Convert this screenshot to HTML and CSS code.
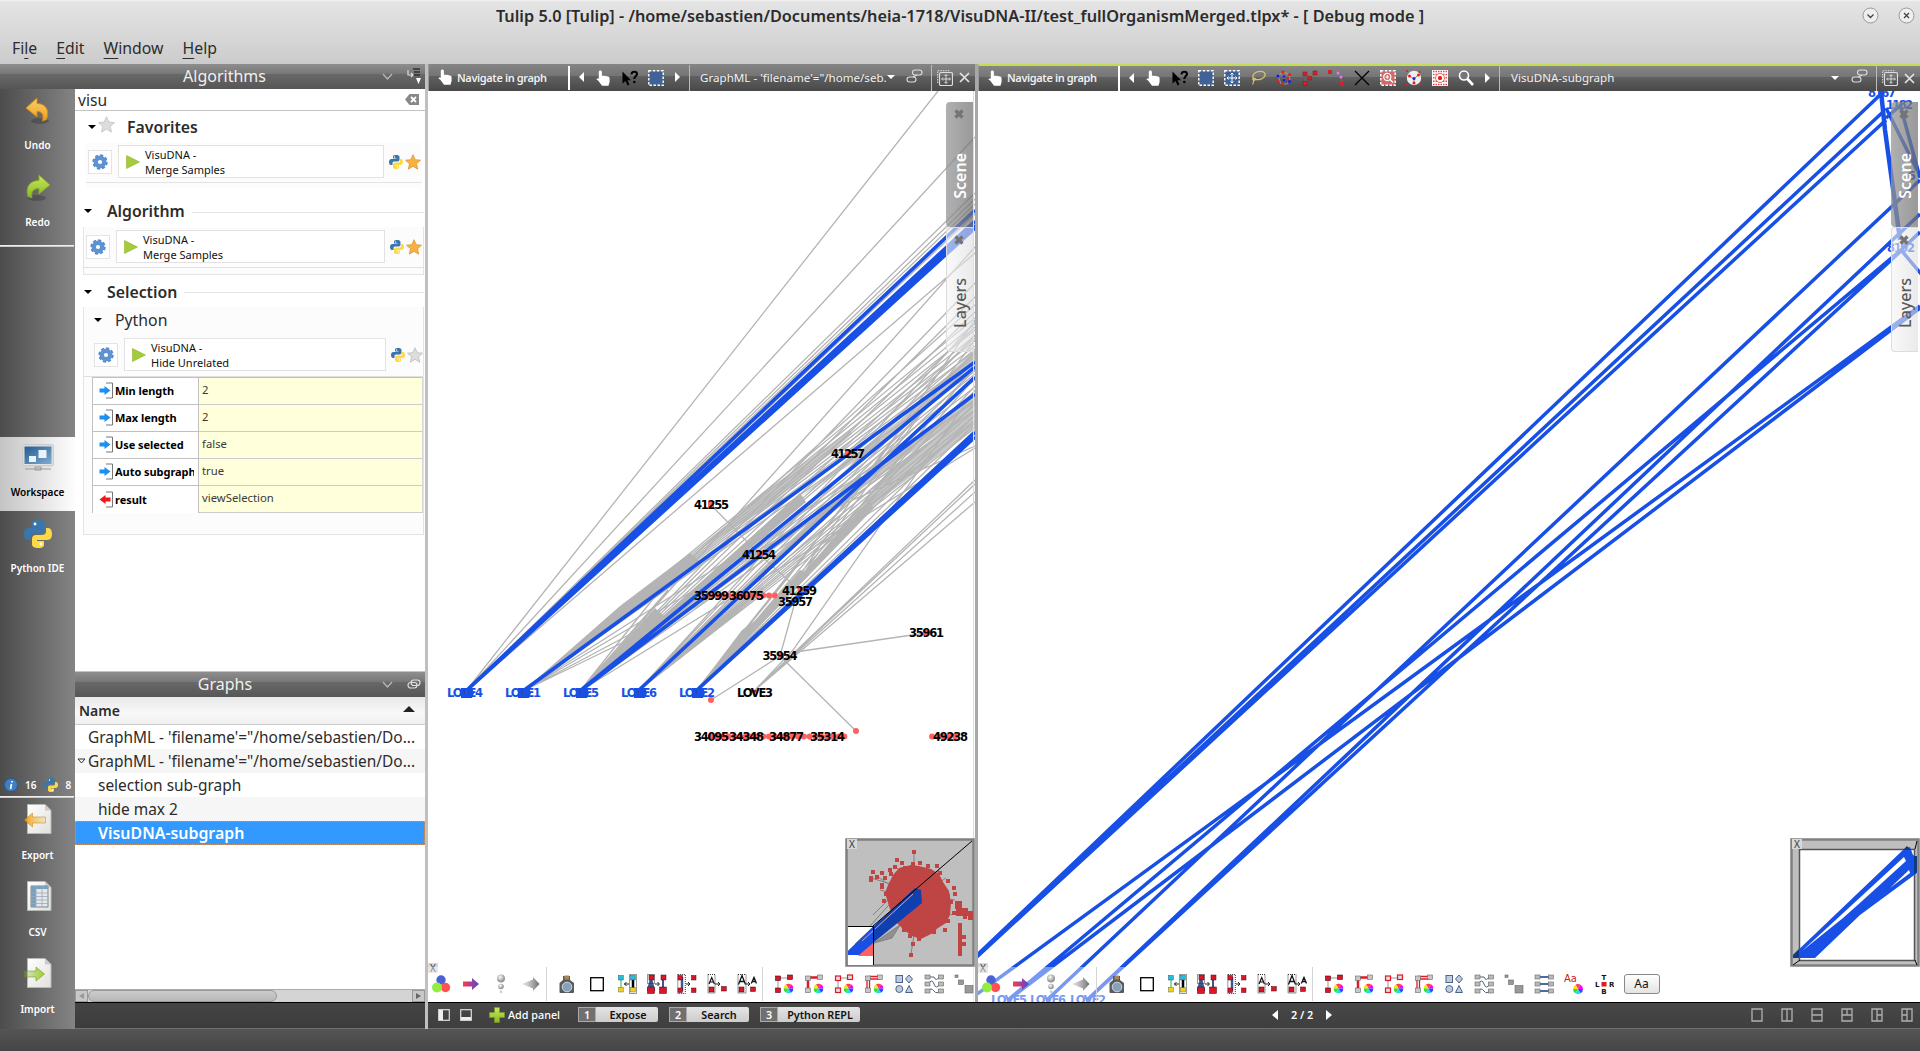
FILE: index.html
```html
<!DOCTYPE html>
<html lang="en">
<head>
<meta charset="utf-8">
<title>Tulip 5.0</title>
<link rel="stylesheet" href="styles.css">
</head>
<body>
<svg class="defs" width="0" height="0">
  <defs>
    <linearGradient id="gOrange" x1="0" y1="0" x2="0" y2="1"><stop offset="0" stop-color="#fcd06a"/><stop offset="1" stop-color="#e8a020"/></linearGradient>
    <linearGradient id="gGreen" x1="0" y1="0" x2="0" y2="1"><stop offset="0" stop-color="#c8e860"/><stop offset="1" stop-color="#88b820"/></linearGradient>
    <linearGradient id="gPage" x1="0" y1="0" x2="1" y2="1"><stop offset="0" stop-color="#fff"/><stop offset="1" stop-color="#e0e0dc"/></linearGradient>
    <linearGradient id="gOut" x1="0" x2="1"><stop offset="0" stop-color="#f0a010"/><stop offset="1" stop-color="#f8c860" stop-opacity=".3"/></linearGradient>
    <linearGradient id="gIn" x1="0" x2="1"><stop offset="0" stop-color="#90c030" stop-opacity=".2"/><stop offset="1" stop-color="#a0d030"/></linearGradient>
    <linearGradient id="gArrow" x1="0" x2="1"><stop offset="0" stop-color="#ff3a4a"/><stop offset="1" stop-color="#4a4ad8"/></linearGradient>
    <linearGradient id="gFade" x1="0" x2="1"><stop offset="0" stop-color="#aaa" stop-opacity=".3"/><stop offset="1" stop-color="#6c6c6c"/></linearGradient>
    <linearGradient id="gBlue" x1="0" y1="0" x2="1" y2="1"><stop offset="0" stop-color="#245a92"/><stop offset="1" stop-color="#80acd0"/></linearGradient>
    <radialGradient id="gBall" cx=".4" cy=".35"><stop offset="0" stop-color="#fff"/><stop offset="1" stop-color="#999"/></radialGradient>
  </defs>
  <symbol id="python" viewBox="0 0 28 28">
    <path fill="#3a76ab" d="M14 0C8 0 8 2 8 4v3h7v1H5C1 8 0 11 0 14s1 6 4 6h3v-4c0-2 2-3 4-3h6c3 0 4-2 4-4V4c0-3-3-4-7-4z"/>
    <path fill="#ffd945" d="M14 28c6 0 6-2 6-4v-3h-7v-1h10c4 0 5-3 5-6s-1-6-4-6h-2v4c0 2-2 3-4 3h-6c-3 0-4 2-4 4v5c0 3 3 4 6 4z"/>
    <circle cx="11" cy="4" r="1.4" fill="#fff"/><circle cx="17" cy="24" r="1.4" fill="#fff"/>
  </symbol>
  <symbol id="gear" viewBox="0 0 16 16">
    <circle cx="8" cy="8" r="6.6" fill="none" stroke="#5588c8" stroke-width="2.2" stroke-dasharray="3 2.18"/>
    <circle cx="8" cy="8" r="4.3" fill="none" stroke="#5e92d2" stroke-width="4.4"/>
  </symbol>
  <symbol id="star" viewBox="0 0 16 16"><path d="M8 .7l2.2 5 5.3.5-4 3.6 1.2 5.4L8 12.3l-4.7 2.9 1.2-5.4-4-3.6 5.3-.5z" stroke-width=".8" stroke-linejoin="round"/></symbol>
  <symbol id="play" viewBox="0 0 14 14"><path d="M.5.5L13.5 7 .5 13.5z" fill="#a4cc3a" stroke="#90b430" stroke-width=".6"/></symbol>
  <symbol id="hand" viewBox="0 0 16 16"><path fill="#fff" d="M4.3.5c1 0 1.6.6 1.6 1.600V6l1-.4 1.500.3 1-.1 1.300.5 1.400.1c1.200.4 1.500 1.100 1.500 2.200v3.500L12.500 15.800H6L2.300 10.800.5 9.600c0-1 1.300-1.400 2.300-.8V2.100C2.800 1.100 3.400.5 4.300.5z"/></symbol>
  <symbol id="help" viewBox="0 0 16 16"><path d="M.5 1.500v12l3-2.500 2 4.500 2-1-2-4.200H9z"/><path d="M9.500 4.500c0-4 5.500-3.500 5.500-.5 0 2-2.700 2.300-2.700 5" fill="none" stroke="#000" stroke-width="2"/><circle cx="12.300" cy="12" r="1.300"/></symbol>
  <symbol id="sel" viewBox="0 0 16 16"><rect x=".8" y=".8" width="14.400" height="14.400" fill="#3f6396" stroke="#fff" stroke-width="1.400" stroke-dasharray="2.500 1.500"/></symbol>
  <symbol id="selmove" viewBox="0 0 16 16"><use href="#sel"/><path d="M8 3v10M3 8h10M6.500 4.500L8 3l1.500 1.500M6.500 11.500L8 13l1.500-1.500M4.500 6.500L3 8l1.500 1.500M11.500 6.500L13 8l-1.500 1.500" stroke="#fff" fill="none"/></symbol>
  <symbol id="lasso" viewBox="0 0 16 16"><ellipse cx="9" cy="5.500" rx="6.300" ry="4" transform="rotate(-15 9 5.500)" fill="none" stroke="#d8c070" stroke-width="1.300"/><path d="M3.500 8c-2 2 1 3 2 1.500S3 8 3.500 10s0 3-1 4.500" stroke="#d8c070" fill="none" stroke-width="1.200"/></symbol>
  <symbol id="ring" viewBox="0 0 16 16"><path d="M2 6l5-4 6 2 1 6-3 4-6 0z M8 6v4" fill="none" stroke="#aaa" stroke-width=".8"/><g fill="#f01818"><circle cx="7" cy="2" r="1.500"/><circle cx="13.500" cy="4.500" r="1.500"/><circle cx="2" cy="11" r="1.500"/><circle cx="6.500" cy="14" r="1.500"/><circle cx="12" cy="8" r="1.300"/></g><g fill="#1818f0"><circle cx="2" cy="6" r="1.500"/><circle cx="8" cy="6.500" r="1.300"/><circle cx="8" cy="10" r="1.300"/><circle cx="13.500" cy="11.500" r="1.500"/></g></symbol>
  <symbol id="edit" viewBox="0 0 16 16"><path d="M3 4v9l4-5M8 8l5-5" stroke="#668" fill="none"/><g fill="#d82028" stroke="#701018" stroke-width=".4"><rect x="1" y="2" width="4" height="4"/><rect x="11" y="1" width="4" height="4"/><rect x="6" y="6.500" width="3.500" height="3.500"/><rect x="1" y="11.500" width="4" height="4"/></g></symbol>
  <symbol id="bend" viewBox="0 0 16 16"><path d="M2 2q10-1 12 11" stroke="#778" fill="none" stroke-dasharray="2 1"/><rect x="0" y="0" width="4" height="4" fill="#d82028"/><rect x="12" y="11.500" width="4" height="4" fill="#d82028"/><circle cx="10" cy="3" r="1.500" fill="#f070f0"/><circle cx="13" cy="7" r="1.500" fill="#f070f0"/></symbol>
  <symbol id="cross" viewBox="0 0 16 16"><path d="M1 1l14 14M15 1L1 15" stroke="#000" stroke-width="1.300"/></symbol>
  <symbol id="zoombox" viewBox="0 0 16 16"><rect x=".8" y=".8" width="14.400" height="14.400" fill="#cf6a6a" stroke="#fff" stroke-width="1.400" stroke-dasharray="2.500 1.500"/><circle cx="7.300" cy="7" r="3.600" fill="none" stroke="#fff" stroke-width="1.200"/><path d="M10 9.500l3 3M5.500 7h3.600M7.300 5.200v3.600" stroke="#fff" stroke-width="1.200"/></symbol>
  <symbol id="nbr" viewBox="0 0 16 16"><circle cx="8" cy="8" r="7.200" fill="#eee"/><path d="M3.500 6L8 9l4-4M8 9v4" stroke="#888" fill="none"/><circle cx="8" cy="8.500" r="1.500" fill="#1818f0"/><g fill="#f01818"><circle cx="3.500" cy="6" r="1.500"/><circle cx="12.500" cy="5" r="1.500"/><circle cx="8" cy="13" r="1.500"/><circle cx="1" cy="1" r="1"/><circle cx="15" cy="15" r="1"/><circle cx="1" cy="14.500" r="1"/><circle cx="13.500" cy="2" r="1"/></g></symbol>
  <symbol id="fish" viewBox="0 0 16 16"><rect width="16" height="16" fill="#fff"/><path d="M1 1.500h14M1 4.500h14M1 7.800h14M1 11.200h14M1 14.500h14" stroke="#f04040" stroke-width="1.500" stroke-dasharray="1.500 1"/><circle cx="8" cy="8" r="4.500" fill="#fff" stroke="#e86868"/><rect x="6" y="6" width="4" height="4" rx="1.500" fill="#f01818"/></symbol>
  <symbol id="mag" viewBox="0 0 16 16"><circle cx="6" cy="5.500" r="4.500" fill="#777" stroke="#fff" stroke-width="1.600"/><path d="M9.500 9l5.500 6" stroke="#fff" stroke-width="2.600"/></symbol>
  <symbol id="link" viewBox="0 0 17 14"><g fill="none" stroke="#ddd" stroke-width="1.100"><rect x="6.500" y="1" width="9.500" height="5" rx="2.500"/><rect x="1" y="8" width="9" height="5" rx="2.500"/><path d="M11 6L7 8"/></g></symbol>
  <symbol id="expand" viewBox="0 0 16 16"><path d="M.7 13V.7H13" fill="none" stroke="#ddd" stroke-dasharray="1.500 1"/><rect x="2.500" y="2.500" width="13" height="13" rx="1.500" fill="none" stroke="#ddd" stroke-width="1.200"/><path d="M9 5v8M5 9h8M7.500 6L9 4.500 10.500 6M7.500 12L9 13.500l1.500-1.500M6 7.500L4.500 9 6 10.500M12 7.500L13.500 9 12 10.500" stroke="#ddd" fill="none"/></symbol>
  <symbol id="close" viewBox="0 0 11 11"><path d="M1 1l9 9M10 1l-9 9" stroke="#e4e4e4" stroke-width="1.700"/></symbol>
  <symbol id="xmark" viewBox="0 0 12 12"><path d="M2.500 2.500l7 7M9.500 2.500l-7 7" stroke="#747474" stroke-width="3.200"/></symbol>
  <symbol id="chev" viewBox="0 0 11 7"><path d="M1 1l4.500 5L10 1" fill="none" stroke="#b4b4b4" stroke-width="1.400"/></symbol>
  <symbol id="rgb" viewBox="0 0 20 20"><circle cx="10" cy="6" r="4.700" fill="#4a60d8"/><circle cx="14.500" cy="13.500" r="4.700" fill="#ff5050"/><circle cx="6" cy="13.500" r="5" fill="#90ee40"/></symbol>
  <symbol id="arrow" viewBox="0 0 20 20"><path d="M2 7.500h9V4l7 6-7 6v-3.500H2z" fill="url(#gArrow)"/></symbol>
  <symbol id="balls" viewBox="0 0 20 20"><circle cx="10" cy="4.500" r="4" fill="url(#gBall)"/><circle cx="10" cy="12.500" r="2.800" fill="url(#gBall)"/><circle cx="10" cy="17.800" r="1.400" fill="#ccc"/></symbol>
  <symbol id="fade" viewBox="0 0 20 20"><path d="M1 10l11-4.500V3l6.500 7-6.500 7v-2.500z" fill="url(#gFade)"/></symbol>
  <symbol id="cam" viewBox="0 0 20 20"><path d="M6 2h7v4l4 3v9q0 1-1 1H3.500q-1 0-1-1V9L6 6z" fill="#5a5a5a"/><rect x="7.500" y="1.500" width="4.500" height="4" fill="#a88858"/><circle cx="10" cy="13" r="4.800" fill="#88a0b8" stroke="#c8d8e8"/></symbol>
  <symbol id="sq" viewBox="0 0 20 20"><rect x="3.700" y="3.700" width="12.600" height="13" fill="#fff" stroke="#000" stroke-width="1.300"/></symbol>
  <symbol id="c1" viewBox="0 0 20 20"><path d="M4 3v14" stroke="#7ad070" stroke-width="1.500"/><path d="M16 3v14" stroke="#000" stroke-width="2.500"/><rect x="12.500" y=".5" width="7" height="19" fill="none" stroke="#333" stroke-dasharray="1 1"/><path d="M7 10h5M9.500 8L7.500 10l2 2" stroke="#222" fill="none"/><g fill="#20c0d8" stroke="#137" stroke-width=".4"><rect x="1.500" y="1.500" width="4.800" height="4.500"/><rect x="13.500" y="1.500" width="4.800" height="4.500"/></g><g fill="#f0d020" stroke="#650" stroke-width=".4"><rect x="1.500" y="13.500" width="4.800" height="4.500"/><rect x="13.500" y="13.500" width="4.800" height="4.500"/></g></symbol>
  <symbol id="c2" viewBox="0 0 20 20"><path d="M4 4l-3 12h6zM16 4v11" stroke="#3a5a90" stroke-width="2" fill="#3a5a90"/><rect x=".5" y=".5" width="7" height="9" fill="none" stroke="#333" stroke-dasharray="1 1"/><path d="M8 10h4M10.500 8l2 2-2 2" stroke="#222" fill="none"/><g fill="#d8182a" stroke="#501" stroke-width=".5"><rect x="2" y="1" width="5" height="5"/><rect x="14" y="1" width="5" height="5"/><rect x=".5" y="13" width="7" height="6.500"/><rect x="12.500" y="13" width="7" height="6.500"/></g></symbol>
  <symbol id="c3" viewBox="0 0 20 20"><path d="M5 3v14" stroke="#3a5a90" stroke-width="2.500"/><rect x=".8" y=".5" width="7.500" height="19" fill="none" stroke="#333" stroke-dasharray="1 1"/><path d="M9 10h4M11 8l2 2-2 2" stroke="#222" fill="none"/><g fill="#d8182a" stroke="#501" stroke-width=".5"><rect x="1" y="1.500" width="4.500" height="4.500"/><rect x="14.500" y="1.500" width="4.500" height="4.500"/><rect x="1" y="14" width="4.500" height="4.500"/><rect x="14.500" y="14" width="4.500" height="4.500"/></g></symbol>
  <symbol id="c4" viewBox="0 0 20 20"><rect x="1" y=".5" width="7" height="18.500" fill="none" stroke="#333" stroke-dasharray="1 1"/><path d="M2 10L4.700 3.500 7.400 10M3 8h3.400" fill="none" stroke="#111" stroke-width="1.200"/><path d="M8 10h5M11 8l2 2-2 2" stroke="#222" fill="none"/><g fill="#d8182a" stroke="#501" stroke-width=".5"><rect x="2" y="13" width="5" height="5"/><rect x="14.500" y="12.500" width="4.800" height="4.500"/></g></symbol>
  <symbol id="c5" viewBox="0 0 20 20"><rect x="1" y=".5" width="8" height="18.500" fill="none" stroke="#333" stroke-dasharray="1 1"/><path d="M1.500 10.500L5 1.500l3.500 9M3 7.500h4M14.300 9.500L17 3.500l2.500 6M15.200 7.500h3.300" fill="none" stroke="#111" stroke-width="1.300"/><path d="M9 10h4M11 8l2 2-2 2" stroke="#222" fill="none"/><g fill="#d8182a" stroke="#501" stroke-width=".5"><rect x="2" y="13" width="5" height="5"/><rect x="13.500" y="13" width="5" height="4.500"/></g></symbol>
  <symbol id="wheel" viewBox="0 0 10 10"><path fill="#f0f" d="M5 5L10 5A5 5 0 0 0 7.500.7z"/><path fill="#f44" d="M5 5L7.500.7A5 5 0 0 0 2.500.7z"/><path fill="#fd2" d="M5 5L2.500.7A5 5 0 0 0 0 5z"/><path fill="#3d3" d="M5 5L0 5A5 5 0 0 0 2.500 9.300z"/><path fill="#2dd" d="M5 5L2.500 9.300A5 5 0 0 0 7.500 9.300z"/><path fill="#34f" d="M5 5L7.500 9.300A5 5 0 0 0 10 5z"/></symbol>
  <symbol id="d1" viewBox="0 0 20 20"><path d="M4 4h12M4 4v12" stroke="#bbb" stroke-width="1.500"/><g fill="#d8182a" stroke="#501" stroke-width=".6"><rect x="1.500" y="2" width="5" height="4.500"/><rect x="13.500" y="1" width="5" height="4.500"/><rect x="1.500" y="14" width="5" height="4.500"/></g><use href="#wheel" x="9.500" y="9.500" width="10" height="10"/></symbol>
  <symbol id="d2" viewBox="0 0 20 20"><path d="M4 3.500h12M4 4v12" stroke="#e01828" stroke-width="2.500"/><g fill="#c8c8c8" stroke="#666" stroke-width=".6"><rect x="1.500" y="2" width="5" height="4.500"/><rect x="13.500" y="1" width="5" height="4.500"/><rect x="1.500" y="14" width="5" height="4.500"/></g><use href="#wheel" x="9.500" y="9.500" width="10" height="10"/></symbol>
  <symbol id="d3" viewBox="0 0 20 20"><path d="M4 4h12M4 4v12" stroke="#bbb" stroke-width="1.500"/><g fill="#ddd" stroke="#e01828" stroke-width="1.200"><rect x="1.500" y="2" width="5" height="4.500"/><rect x="13.500" y="1" width="5" height="4.500"/><rect x="1.500" y="14" width="5" height="4.500"/></g><use href="#wheel" x="9.500" y="9.500" width="10" height="10"/></symbol>
  <symbol id="d4" viewBox="0 0 20 20"><path d="M4 2.500h12M4 5h12M3 4v12M5.500 4v12" stroke="#e01828" stroke-width="1.300"/><g fill="#c8c8c8" stroke="#666" stroke-width=".6"><rect x="1.500" y="2" width="5" height="4.500"/><rect x="13.500" y="1" width="5" height="4.500"/><rect x="1.500" y="14" width="5" height="4.500"/></g><use href="#wheel" x="9.500" y="9.500" width="10" height="10"/></symbol>
  <symbol id="d5" viewBox="0 0 20 20"><g fill="#c0ccdc" stroke="#4a648c"><rect x="2" y="1.500" width="6.500" height="7"/><path d="M15 1l3.500 4L15 9l-3.500-4zM15 11.500l3.500 7h-7z"/><circle cx="5.300" cy="15" r="3.500"/></g></symbol>
  <symbol id="d6" viewBox="0 0 20 20"><path d="M4 3h6q2 5 5 0M4 10q4-6 6 0t6 0M4 17q3-4 6 0t6-1" fill="none" stroke="#4a648c"/><g fill="#bbb" stroke="#666" stroke-width=".6"><rect x="1" y="1" width="5" height="4"/><rect x="14.500" y="1" width="5" height="4"/><rect x="1" y="8" width="5" height="4"/><rect x="14.500" y="8" width="5" height="4"/><rect x="1" y="15" width="5" height="4"/><rect x="14.500" y="15" width="5" height="4"/></g></symbol>
  <symbol id="d7" viewBox="0 0 20 20"><g fill="#999" stroke="#666" stroke-width=".6"><rect x="1" y="1" width="3" height="2.500"/><rect x="4.500" y="6" width="5" height="4.500"/><rect x="11" y="11.500" width="8" height="7.500"/></g></symbol>
  <symbol id="d8" viewBox="0 0 20 20"><path d="M4 3h12M4 10h12M4 17h12" stroke="#4a6ca0" stroke-width="2"/><g fill="#bbb" stroke="#666" stroke-width=".6"><rect x="1" y="1" width="5" height="4"/><rect x="14.500" y="1" width="5" height="4"/><rect x="1" y="8" width="5" height="4"/><rect x="14.500" y="8" width="5" height="4"/><rect x="1" y="15" width="5" height="4"/><rect x="14.500" y="15" width="5" height="4"/></g></symbol>
</svg>

<header class="title"><span>Tulip 5.0 [Tulip] - /home/sebastien/Documents/heia-1718/VisuDNA-II/test_fullOrganismMerged.tlpx* - [ Debug mode ]</span>
  <div class="wm"><svg width="17" height="17" viewBox="0 0 17 17"><circle cx="8.500" cy="8.500" r="7.500" fill="#eee" stroke="#999"/><path d="M5.500 7.500l3 3 3-3" fill="none" stroke="#444" stroke-width="1.300"/></svg><svg width="17" height="17" viewBox="0 0 17 17"><circle cx="8.500" cy="8.500" r="7.500" fill="#eee" stroke="#999"/><path d="M6 6l5 5M11 6l-5 5" stroke="#444" stroke-width="1.300"/></svg></div>
</header>
<nav class="menu"><span>Fi<u>l</u>e</span><span><u>E</u>dit</span><span><u>W</u>indow</span><span><u>H</u>elp</span></nav>

<main class="main">
<section class="left">
  <div class="dockhead wide"><span>Algorithms</span><svg class="hc" width="11" height="7"><use href="#chev"/></svg><svg class="hi" width="14" height="17" viewBox="0 0 14 17"><path d="M1 2v5h5M4 5l2 2-2 2" stroke="#ddd" fill="none" stroke-width="1.200"/><path d="M6 1h7M7 4h6M7 7h6" stroke="#333" stroke-width="1.500"/><path d="M9 10h5l-2.500 6z" fill="#fff"/></svg></div>
  <div class="leftbody">
    <aside class="side">
      <div class="tool first"><svg width="26" height="28" viewBox="0 0 26 28"><ellipse cx="15" cy="24" rx="9" ry="3" fill="#000" opacity=".2"/><path d="M1 11L12 1v5.500c9 0 13 7 9.500 16l-4 1.500c1.500-6 0-9.500-5.500-9.500V20z" fill="url(#gOrange)" stroke="#d08818"/></svg><b>Undo</b></div>
      <div class="tool first"><svg width="26" height="28" viewBox="0 0 26 28"><ellipse cx="12" cy="24" rx="9" ry="3" fill="#000" opacity=".2"/><path d="M25 11L14 1v5.500C5 6.500 0 13 3 22.500l4 1.500c-1.500-6 1.500-9.500 7-9.500V20z" fill="url(#gGreen)" stroke="#88a828"/></svg><b>Redo</b></div>
      <div class="rule"></div>
      <div class="gap"></div>
      <div class="tool work"><svg width="32" height="28" viewBox="0 0 32 28"><rect x=".8" y=".8" width="30.400" height="21" rx="1" fill="#e4e4e4" stroke="#c4c4c4"/><rect x="2.500" y="2.500" width="27" height="17.500" fill="url(#gBlue)"/><rect x="16.500" y="6" width="8" height="8" fill="#eaf2fa"/><rect x="7" y="12" width="7" height="6" fill="#eaf2fa"/><path d="M3 25h26M13 23h6v3h-6z" stroke="#999" fill="#ddd"/></svg><b>Workspace</b></div>
      <div class="tool ide"><svg width="28" height="28"><use href="#python"/></svg><b>Python IDE</b></div>
      <div class="gap2"></div>
      <div class="counts"><svg width="14" height="14" viewBox="0 0 14 14"><circle cx="7" cy="7" r="6.500" fill="#3f80c4" stroke="#2c5a90"/><path d="M8 3v1.500M7.500 6l-1 5" stroke="#fff" stroke-width="1.700"/></svg><b class="n1">16</b><svg width="14" height="14"><use href="#python"/></svg><b class="n2">8</b></div>
      <div class="rule"></div>
      <div class="tool"><svg width="28" height="30" viewBox="0 0 28 30"><path d="M3.500.5H21l6 6v23H3.500z" fill="url(#gPage)" stroke="#b8b8b4"/><path d="M21 .5v6h6" fill="#ccc"/><path d="M.5 16l8-7v4h13v6h-13v4z" fill="url(#gOut)" stroke="#c88010" stroke-opacity=".5"/></svg><b>Export</b></div>
      <div class="tool"><svg width="28" height="30" viewBox="0 0 28 30"><path d="M3.500.5H21l6 6v23H3.500z" fill="url(#gPage)" stroke="#b8b8b4"/><path d="M21 .5v6h6" fill="#ccc"/><path d="M7 5h17v21H7z" fill="#e4e8ec" stroke="#789"/><path d="M7 5h5v21H7zM7 5h17v3H7z" fill="#7aa0bc"/><path d="M7 12h17M7 15.500h17M7 19h17M7 22.500h17M12 5v21M18 5v21" stroke="#9ab" stroke-width=".8"/></svg><b>CSV</b></div>
      <div class="tool"><svg width="28" height="30" viewBox="0 0 28 30"><path d="M3.500.5H21l6 6v23H3.500z" fill="url(#gPage)" stroke="#b8b8b4"/><path d="M21 .5v6h6" fill="#ccc"/><path d="M0 13h12V9l8.500 7-8.500 7v-4H0z" fill="url(#gIn)" stroke="#688820" stroke-opacity=".5"/></svg><b>Import</b></div>
    </aside>
    <div class="docks">
      <div class="search"><span>visu</span><svg width="14" height="11" viewBox="0 0 14 11"><path d="M4.500 0H14v11H4.500L0 5.500z" fill="#888"/><path d="M6 3l5 5M11 3L6 8" stroke="#fff" stroke-width="1.800"/></svg></div>
      <div class="algos">
        <div class="h fav"><i class="tri"></i><svg width="17" height="17" fill="#ddd" stroke="#c4c4c4"><use href="#star"/></svg><span>Favorites</span></div>
        <div class="favbox"><div class="item"><i class="gearbox"><svg width="16" height="16"><use href="#gear"/></svg></i><div class="run"><svg width="14" height="14"><use href="#play"/></svg><span>VisuDNA -<br>Merge Samples</span></div><svg width="14" height="14"><use href="#python"/></svg><svg class="st" width="16" height="16" fill="#fbb040" stroke="#d89838"><use href="#star"/></svg></div></div>
        <div class="h"><i class="tri"></i><span>Algorithm</span><i class="line"></i></div>
        <div class="group"><div class="item"><i class="gearbox"><svg width="16" height="16"><use href="#gear"/></svg></i><div class="run"><svg width="14" height="14"><use href="#play"/></svg><span>VisuDNA -<br>Merge Samples</span></div><svg width="14" height="14"><use href="#python"/></svg><svg class="st" width="16" height="16" fill="#fbb040" stroke="#d89838"><use href="#star"/></svg></div></div>
        <div class="h s"><i class="tri"></i><span>Selection</span><i class="line"></i></div>
        <div class="group big">
          <div class="sub"><i class="tri"></i><span>Python</span></div>
          <div class="item"><i class="gearbox"><svg width="16" height="16"><use href="#gear"/></svg></i><div class="run"><svg width="14" height="14"><use href="#play"/></svg><span>VisuDNA -<br>Hide Unrelated</span></div><svg width="14" height="14"><use href="#python"/></svg><svg class="st" width="16" height="16" fill="#ddd" stroke="#bbb"><use href="#star"/></svg></div>
          <div class="params">
            <div class="p"><b><svg width="15" height="17" viewBox="0 0 15 17"><path d="M7 1h6.500v15H7" fill="none" stroke="#777"/><path d="M.5 6.500h5V4l6 4.500-6 4.500v-2.500h-5z" fill="#1a90f0"/></svg><span>Min length</span></b><span>2</span></div>
            <div class="p"><b><svg width="15" height="17" viewBox="0 0 15 17"><path d="M7 1h6.500v15H7" fill="none" stroke="#777"/><path d="M.5 6.500h5V4l6 4.500-6 4.500v-2.500h-5z" fill="#1a90f0"/></svg><span>Max length</span></b><span>2</span></div>
            <div class="p"><b><svg width="15" height="17" viewBox="0 0 15 17"><path d="M7 1h6.500v15H7" fill="none" stroke="#777"/><path d="M.5 6.500h5V4l6 4.500-6 4.500v-2.500h-5z" fill="#1a90f0"/></svg><span>Use selected</span></b><span>false</span></div>
            <div class="p"><b><svg width="15" height="17" viewBox="0 0 15 17"><path d="M7 1h6.500v15H7" fill="none" stroke="#777"/><path d="M.5 6.500h5V4l6 4.500-6 4.500v-2.500h-5z" fill="#1a90f0"/></svg><span>Auto subgraph</span></b><span>true</span></div>
            <div class="p"><b><svg width="15" height="17" viewBox="0 0 15 17"><path d="M7 1h6.500v15H7" fill="none" stroke="#777"/><path d="M11.500 6.500h-5V4l-6 4.500 6 4.500v-2.500h5z" fill="#f01818"/></svg><span>result</span></b><span>viewSelection</span></div>
          </div>
        </div>
      </div>
      <div class="dockhead"><span>Graphs</span><svg class="hc" width="11" height="7"><use href="#chev"/></svg><svg class="hi" width="14" height="10" viewBox="0 0 14 10"><g fill="none" stroke="#ddd" stroke-width="1.200"><rect x="4" y="1" width="9" height="5.500" rx="2.700"/><rect x="1" y="3.500" width="9" height="5.500" rx="2.700"/></g></svg></div>
      <div class="name"><span>Name</span><i></i></div>
      <div class="rows">
        <div class="r"><span>GraphML - 'filename'="/home/sebastien/Do...</span></div>
        <div class="r alt"><svg width="9" height="6" viewBox="0 0 9 6"><path d="M1 1h7L4.500 5z" fill="none" stroke="#333"/></svg><span>GraphML - 'filename'="/home/sebastien/Do...</span></div>
        <div class="r in"><span>selection sub-graph</span></div>
        <div class="r in alt"><span>hide max 2</span></div>
        <div class="r in on"><span>VisuDNA-subgraph</span></div>
      </div>
      <div class="scroll"><i class="sb l"></i><i class="thumb"></i><i class="sb rr"></i></div>
      <div class="foot"></div>
    </div>
  </div>
</section>

<div class="work2">
 <div class="panels">
  <section class="panel a">
    <div class="bar">
      <div class="cur"><svg width="16" height="16"><use href="#hand"/></svg><span>Navigate in graph</span></div>
      <i class="prev"></i><svg><use href="#hand"/></svg><svg><use href="#help"/></svg><svg><use href="#sel"/></svg><i class="next"></i>
      <div class="combo"><span>GraphML - 'filename'="/home/seb.</span><i></i></div>
      <svg class="lk"><use href="#link"/></svg><div class="end"><svg class="ex"><use href="#expand"/></svg><svg class="cl"><use href="#close"/></svg></div>
    </div>
    <div class="view">
      <svg class="graph" width="547" height="911" viewBox="428 91 547 911">
        <g fill="#b4b4b4">
          <path d="M523 691L620 606L690 553L700 562zM580 691L655 608L664 616zM580 691L800 493L806 502zM638 691L860 475L866 482zM696 691L742 630L756 620L800 570L810 574zM696 691L870 499L873 508z"/>
          <path d="M695 553L760 495L850 430L852 434L770 505zM800 497L900 420L975 350L975 362L900 432zM820 520L900 447L975 395L975 410L900 460zM800 578L890 470L975 408L975 428L880 500z" opacity=".75"/>
        </g>
        <g fill="none" stroke="#b4b4b4" stroke-width="1.300">
          <path d="M466 691L938 91M466 691L975 137M466 691L975 193M466 691L975 199M466 691L975 204M466 691L975 214M466 691L975 253"/>
          <path d="M523 691L975 318M523 691L975 324M523 691L975 330M523 691L975 336M523 691L975 341M523 691L975 346M523 691L975 351M523 691L975 357M523 691L975 371M523 691L975 402M523 691L720 575L900 462M523 691L710 592L860 480M523 691L700 605L880 440"/>
          <path d="M580 691L975 247M580 691L975 283M580 691L975 297M580 691L975 312M580 691L975 327M580 691L975 338M580 691L975 349M580 691L975 354M580 691L975 374M580 691L975 380M580 691L975 387M580 691L975 400M580 691L975 410M580 691L975 448M580 691L668 590M580 691L672 575L975 305"/>
          <path d="M638 691L975 322M638 691L975 335M638 691L975 352M638 691L975 361M638 691L975 370M638 691L975 391M638 691L975 399M638 691L975 405M638 691L975 411M638 691L975 416M638 691L975 422M638 691L975 428M638 691L830 510L975 446M638 691L790 556L920 450"/>
          <path d="M696 691L800 575L975 320M696 691L806 570L975 340M696 691L800 580L975 366M696 691L812 560L975 378M696 691L975 386M696 691L975 403M696 691L975 415M696 691L975 424M696 691L975 430M696 691L975 434M696 691L820 545L975 420M696 691L790 575L900 430M696 691L812 545L930 400"/>
          <path d="M754 691L975 480M754 691L975 484M754 691L975 492M754 691L975 502M754 691L793 650L975 390"/>
          <path d="M711 505L759 554L799 590M795 602L780 656M780 656L711 700M780 656L856 731M795 652L926 633"/>
        </g>
        <g fill="none" stroke="#1850e6" stroke-width="3.600" stroke-linejoin="bevel">
          <path d="M466 691L975 210M466 691L975 221M466 691L975 225M466 691L975 228M523 691L975 362M580 691L975 367M580 691L975 394M638 691L975 377M696 691L975 432M696 691L975 437"/>
        </g>
        <g fill="#ff6060"><circle cx="711" cy="700" r="3"/><circle cx="856" cy="731" r="3"/>
          <path d="M845 450h6v5h-6zM708 502h6v5h-6zM757 551h6v5h-6zM798 587h6v5h-6zM923 630h6v5h-6zM778 653h6v5h-6z"/></g>
        <path d="M711 595.500h66M711 736.500h135M932 736.500h28" fill="none" stroke="#ff6060" stroke-width="6" stroke-linecap="round" stroke-dasharray="0 5.800"/>
        <g fill="#1850e6"><path d="M461 688h11l2 5-2 5h-11zM518 688h11l2 5-2 5h-11zM576 688h11l2 5-2 5h-11zM634 688h11l2 5-2 5h-11zM692 688h11l2 5-2 5h-11z"/></g>
        <g fill="#b02050"><path d="M464 691h3v3h-3zM521 691h3v3h-3zM579 691h3v3h-3zM637 691h3v3h-3zM695 691h3v3h-3zM751 690h6l-3 5z"/></g>
        <g class="lb blue"><text x="447" y="697" textLength="35">LOVE4</text><text x="505" y="697" textLength="35">LOVE1</text><text x="563" y="697" textLength="35">LOVE5</text><text x="621" y="697" textLength="35">LOVE6</text><text x="679" y="697" textLength="35">LOVE2</text></g>
        <g class="lb"><text x="737" y="697" textLength="35">LOVE3</text><text x="831" y="457.500" textLength="33">41257</text><text x="694" y="509" textLength="34">41255</text><text x="742" y="558.500" textLength="33">41254</text><text x="782" y="594.500" textLength="34">41259</text><text x="778" y="606" textLength="34">35957</text><text x="909" y="637" textLength="34">35961</text><text x="762.500" y="660" textLength="34">35954</text><text x="694" y="600" textLength="34">35999</text><text x="729" y="600" textLength="34">36075</text><text x="694" y="741" textLength="34">34095</text><text x="729" y="741" textLength="34">34348</text><text x="769" y="741" textLength="34">34877</text><text x="810" y="741" textLength="34">35314</text><text x="933" y="741" textLength="34">49238</text></g>
        <path d="M973.500 91V1002" stroke="#ddd"/>
      </svg>
      <div class="tab scene"><svg><use href="#xmark"/></svg><span>Scene</span></div>
      <div class="tab layers"><svg><use href="#xmark"/></svg><span>Layers</span></div>
      <svg class="mini" width="130" height="129" viewBox="845 838 130 129">
        <rect x="846.500" y="839.500" width="127" height="126" fill="#bfbfbf" stroke="#808080" stroke-width="2.500"/>
        <path d="M873 915L895 893M870 926L896 897M874 943L900 925L892 938z" stroke="#808080" fill="#909090"/>
        <path d="M914 852v16M871 878l20 6M875 875l18 12M897 868l14 14M880 890l15 4M911 954l4-26M946 878l-12 8M940 868l-8 12M952 915l-12-8M955 900l-16-2" stroke="#808080" fill="none"/>
        <path d="M885 893l3-8 5-10 6-7 12-3 8 1 12 3 8 5 4 8 6 9 2 12-1 12-4 8-8 5-7 6-10 5-9-3-8-6-10-10-5-14z" fill="#bf4545"/>
        <path d="M912 850h4v4h-4zM895 858h4v4h-4zM900 861h4v4h-4zM903 866h4v4h-4zM893 865h4v4h-4zM911 862h4v4h-4zM918 861h4v4h-4zM926 864h4v4h-4zM935 864h4v4h-4zM938 871h4v4h-4zM888 868h4v4h-4zM880 871h4v4h-4zM871 870h4v4h-4zM869 876h4v6h-4zM875 875h4v4h-4zM883 876h4v4h-4zM880 883h4v6h-4zM889 872h4v4h-4zM882 899h4v4h-4zM884 892h4v4h-4zM946 879h4v4h-4zM952 886h4v4h-4zM953 892h4v4h-4zM946 894h4v4h-4zM949 900h4v4h-4zM952 911h4v4h-4zM946 919h4v4h-4zM943 928h4v4h-4zM936 922h4v4h-4zM932 930h4v4h-4zM926 926h4v6h-4zM918 930h4v4h-4zM908 934h4v4h-4zM902 928h4v4h-4zM917 937h4v4h-4zM911 942h4v4h-4zM909 953h4v4h-4zM955 901h7v8h-7zM956 908h12v8h-12zM963 909h4v10h-4zM968 911h5v9h-5zM958 923h4v33h-4zM962 935h4v4h-4zM962 942h4v4h-4z" fill="#bf4545"/>
        <rect x="848" y="926" width="26" height="39" fill="#fff"/>
        <path d="M855 944l18-17M858 950l14-14" stroke="#999"/>
        <path d="M848 951l26-25 41-38 6 2 1 13-49 40-10 12h-15z" fill="#1040b0"/><path d="M848 951l25-24v17l-12 11h-13z" fill="#1850e6"/><path d="M858 956l15-13v13z" fill="#ff6060"/><path d="M862 941l12-11M875 929l38-35" stroke="#c8a8b8"/>
        <path d="M848 926.500h25.500V965M873 926L972 841" fill="none" stroke="#000"/>
      </svg>
      <i class="mx">X</i>
      <i class="bx">X</i>
      <div class="tools"><svg><use href="#rgb"/></svg><svg><use href="#arrow"/></svg><svg><use href="#balls"/></svg><svg><use href="#fade"/></svg><i></i><svg><use href="#cam"/></svg><svg><use href="#sq"/></svg><svg><use href="#c1"/></svg><svg><use href="#c2"/></svg><svg><use href="#c3"/></svg><svg><use href="#c4"/></svg><svg><use href="#c5"/></svg><i></i><svg><use href="#d1"/></svg><svg><use href="#d2"/></svg><svg><use href="#d3"/></svg><svg><use href="#d4"/></svg><svg><use href="#d5"/></svg><svg><use href="#d6"/></svg><svg><use href="#d7"/></svg></div>
    </div>
  </section>
  <section class="panel b">
    <div class="bar">
      <div class="cur"><svg width="16" height="16"><use href="#hand"/></svg><span>Navigate in graph</span></div>
      <i class="prev"></i><svg><use href="#hand"/></svg><svg><use href="#help"/></svg><svg><use href="#sel"/></svg><svg><use href="#selmove"/></svg><svg><use href="#lasso"/></svg><svg><use href="#ring"/></svg><svg><use href="#edit"/></svg><svg><use href="#bend"/></svg><svg><use href="#cross"/></svg><svg><use href="#zoombox"/></svg><svg><use href="#nbr"/></svg><svg><use href="#fish"/></svg><svg><use href="#mag"/></svg><i class="next"></i>
      <div class="combo"><span>VisuDNA-subgraph</span><i></i></div>
      <svg class="lk"><use href="#link"/></svg><div class="end"><svg class="ex"><use href="#expand"/></svg><svg class="cl"><use href="#close"/></svg></div>
    </div>
    <div class="view">
      <svg class="graph" width="942" height="911" viewBox="978 91 942 911">
        <g fill="none" stroke="#1850e6" stroke-width="3.500">
          <path d="M930 1000L1880 95M930 1000L1884 111M930 1000L1886 120M969 1000L1920 306M1008 1000L1901 250M1008 1000L1920 308M1047 1000L1920 180M1087 1000L1901 251M1087 1000L1920 214"/>
          <path d="M1881 91L1885 130L1900 240" stroke-width="4.500"/><path d="M1886 108L1917 170M1901 108L1920 178M1901 250L1920 232M1901 250L1922 275M1886 118L1902 104"/>
        </g>
        <g class="lb blue"><text x="1868" y="97" textLength="27">8167</text><text x="1886" y="109" textLength="26">1182</text><text x="1887" y="252" textLength="27">8192</text><text x="1908" y="180">5</text><text x="991" y="1004" textLength="35">LOVE5</text><text x="1030" y="1004" textLength="35">LOVE6</text><text x="1070" y="1004" textLength="35">LOVE2</text></g>
      </svg>
      <div class="tab scene"><svg><use href="#xmark"/></svg><span>Scene</span></div>
      <div class="tab layers"><svg><use href="#xmark"/></svg><span>Layers</span></div>
      <svg class="mini" width="130" height="129" viewBox="1790 838 130 129">
        <rect x="1791.500" y="839.500" width="127" height="126" fill="#bfbfbf" stroke="#808080" stroke-width="2.500"/>
        <rect x="1799.500" y="849.500" width="115" height="111" fill="#fff" stroke="#555" stroke-width="1.500"/>
        <path d="M1793 965l7-5M1917 965l-2-5M1917 841l-2 8" stroke="#000"/>
        <path d="M1793 955L1903 850l7-3 3 8 4 2v16l-57 42-45 43h-22z" fill="#1850e6"/>
        <path d="M1802 951L1904 857l2 4-45 41-18 16z" fill="#fff"/><path d="M1890 888l19-18 1 3z" fill="#fff"/>
        <path d="M1793 955l6-6v9h-6zM1903 850l4-4 4 4zM1914 856h3v16l-3 2z" fill="#123a80"/>
      </svg>
      <i class="mx">X</i>
      <i class="bx">X</i>
      <div class="tools"><svg><use href="#rgb"/></svg><svg><use href="#arrow"/></svg><svg><use href="#balls"/></svg><svg><use href="#fade"/></svg><i></i><svg><use href="#cam"/></svg><svg><use href="#sq"/></svg><svg><use href="#c1"/></svg><svg><use href="#c2"/></svg><svg><use href="#c3"/></svg><svg><use href="#c4"/></svg><svg><use href="#c5"/></svg><i></i><svg><use href="#d1"/></svg><svg><use href="#d2"/></svg><svg><use href="#d3"/></svg><svg><use href="#d4"/></svg><svg><use href="#d5"/></svg><svg><use href="#d6"/></svg><svg><use href="#d7"/></svg><svg><use href="#d8"/></svg><svg viewBox="0 0 20 20"><text x="0" y="8" class="ic red">Aa</text><use href="#wheel" x="9" y="10" width="10" height="10"/></svg><svg viewBox="0 0 20 20"><text x="7.500" y="6" class="ic">T</text><text x="1" y="13" class="ic">L</text><text x="15" y="13" class="ic">R</text><text x="7.300" y="20" class="ic">B</text><rect x="7.500" y="8" width="5" height="4.500" fill="#e01828"/></svg><span class="aa">Aa</span></div>
    </div>
  </section>
 </div>
 <footer class="status">
   <svg class="s1" width="12" height="12" viewBox="0 0 12 12"><rect x=".7" y=".7" width="10.600" height="10.600" fill="none" stroke="#ddd" stroke-width="1.200"/><rect x="1" y="1" width="4" height="10" fill="#eee"/></svg>
   <svg class="s2" width="12" height="12" viewBox="0 0 12 12"><rect x=".7" y=".7" width="10.600" height="10.600" fill="none" stroke="#ddd" stroke-width="1.200"/><rect x="1" y="8" width="10" height="3" fill="#eee"/></svg>
   <svg class="s3" width="16" height="16" viewBox="0 0 16 16"><path d="M5.500.5h5v5h5v5h-5v5h-5v-5h-5v-5h5z" fill="url(#gGreen)" stroke="#7a9a20" stroke-width=".6"/></svg>
   <span class="add">Add panel</span>
   <span class="key"><b>1</b><em>Expose</em></span><span class="key"><b>2</b><em>Search</em></span><span class="key w"><b>3</b><em>Python REPL</em></span>
   <span class="page"><i class="pl"></i>2 / 2<i class="pr"></i></span>
   <span class="lay">
     <svg viewBox="0 0 12 14"><path d="M1 1h10v12H1z"/></svg><svg viewBox="0 0 12 14"><path d="M1 1h10v12H1zM6 1v12"/></svg><svg viewBox="0 0 12 14"><path d="M1 1h10v12H1zM1 7h10"/></svg><svg viewBox="0 0 12 14"><path d="M1 1h10v12H1zM1 7h10M6 1v6"/></svg><svg viewBox="0 0 12 14"><path d="M1 1h10v12H1zM6 1v12M6 7h5"/></svg><svg viewBox="0 0 12 14"><path d="M1 1h10v12H1zM6 1v12M1 7h5"/></svg>
   </span>
 </footer>
</div>
</main>
<div class="bottom"></div>
</body>
</html>
```
FILE: styles.css
```css
* { box-sizing: border-box; }
body { margin: 0; width: 1920px; height: 1051px; overflow: hidden; font-family: "Noto Sans", sans-serif; background: #cbcbcb; color: #2c2c2c; display: flex; flex-direction: column; }
svg { display: block; flex: none; }
i, em { font-style: normal; }
.defs { position: absolute; }
.title { height: 32px; background: linear-gradient(#f4f4f4 0, #e4e4e4 2px, #d9d9d9); display: flex; justify-content: center; align-items: center; position: relative; font-size: 16.3px; font-weight: 600; white-space: nowrap; }
.wm { position: absolute; right: 5px; top: 7px; display: flex; gap: 19px; }
.menu { height: 32px; background: linear-gradient(#d9d9d9, #cbcbcb); display: flex; gap: 19px; padding: 4px 0 0 12px; font-size: 15.800px; line-height: 24px; }
.menu u { text-underline-offset: 4px; }
.main { display: flex; height: 965px; }
.left { width: 428px; border-right: 3px solid #c0c0c0; display: flex; flex-direction: column; }
.dockhead { height: 25px; flex: none; display: flex; align-items: center; background: linear-gradient(#8e8e8e, #777 40%, #686868 41%, #565656); color: #f0f0f0; font-size: 16px; padding: 0 4px 1px 0; }
.dockhead span { flex: 1; padding-right: 7px; text-align: center; line-height: 22px; }
.dockhead.wide span { padding: 0 0 0 67px; }
.hc { margin-right: 14px; }
.leftbody { display: flex; flex: 1; min-height: 0; }
.side { width: 75px; background: linear-gradient(90deg, #4c4c4c, #848484); display: flex; flex-direction: column; padding-top: 2px; }
.tool { height: 77px; padding: 6px 0 13px; display: flex; flex-direction: column; align-items: center; justify-content: space-between; color: #fff; font-size: 10px; line-height: 14px; }
.tool b { font-weight: 600; }
.tool.first { padding-bottom: 16px; }
.rule { height: 2px; background: #eee; margin-right: 1px; border-bottom: 1px solid #ccc; flex: none; }
.gap { height: 190px; }
.tool.work { height: 74px; background: linear-gradient(90deg, #c4c4c4, #fdfdfd); color: #000; padding: 7px 0 12px; }
.tool.ide { padding-top: 9px; }
.gap2 { flex: 1; }
.counts { height: 22px; display: flex; align-items: center; padding: 0 0 1px 4px; color: #fff; font-size: 10px; }
.counts b { font-weight: 600; }
.n1 { margin: 0 8px 0 7px; }
.n2 { margin-left: 7px; }
.docks { flex: 1; display: flex; flex-direction: column; min-width: 0; background: #fff; }
.search { height: 22px; border-bottom: 1px solid #c4c4c4; padding: 0 6px 0 3px; display: flex; justify-content: space-between; align-items: center; font-size: 15.600px; }
.algos { height: 561px; border-bottom: 1px solid #c4c4c4; overflow: hidden; }
.h { height: 32px; display: flex; align-items: center; font-weight: 600; font-size: 15.800px; padding-left: 9px; }
.h span { margin-left: 15px; }
.h.fav { padding-left: 13px; }
.h.fav svg { margin: -6px 0 0 2px; }
.h.fav span { margin-left: 12px; }
.tri { border: 4px solid transparent; border-top: 4px solid #000; border-bottom: 0; }
.line { flex: 1; height: 1px; background: #e4e4e4; margin: 2px 1px 0 7px; }
.favbox { margin: 0 3px 7px 11px; height: 45px; background: #fcfcfc; padding-top: 2px; }
.favbox .item { padding-left: 2px; height: 38px; border-bottom: 1px solid #e4e4e4; }
.item { display: flex; align-items: center; padding-bottom: 4px; }
.gearbox { width: 24px; height: 24px; border: 1px solid #e4e4e4; background: #fff; padding: 3px; margin-right: 6px; }
.run { width: 266px; height: 33px; border: 1px solid #e2e2e2; background: #fff; display: flex; align-items: center; gap: 5px; padding-left: 7px; font-size: 11px; line-height: 15px; color: #111; margin-right: 5px; }
.st { margin-left: 2px; }
.group { margin: 0 1px 1px 8px; border: 1px solid #e4e4e4; border-top: 0; background: #fcfcfc; height: 48px; padding-top: 3px; }
.group .item { padding-left: 2px; height: 38px; border-bottom: 1px solid #e0e0e0; }
.group .run { width: 269px; }
.h.s { height: 31px; }
.group.big { height: 228px; padding-top: 0; }
.big .sub { height: 31px; display: flex; align-items: center; font-size: 15.800px; padding: 0 0 5px 10px; gap: 13px; }
.group.big .item { padding-left: 10px; height: 39px; padding-bottom: 5px; }
.big .run { width: 262px; }
.params { margin-left: 8px; border: 1px solid #c0c0c0; border-right-color: #d8d8d8; border-bottom: 0; }
.p { display: flex; height: 27px; }
.p b { width: 106px; border-right: 1px solid #c0c0c0; border-bottom: 1px solid #c0c0c0; background: #fff; color: #000; display: flex; align-items: center; padding: 0 4px 1px 6px; gap: 1px; overflow: hidden; white-space: nowrap; }
.p b span { overflow: hidden; font-weight: 700; font-size: 11px; letter-spacing: -.05px; }
.p:last-child b { border-bottom: 0; }
.p > span { flex: 1; background: #ffffdc; border-bottom: 1px solid #ccc; padding: 3px 0 0 3px; line-height: 18px; color: #3a3a3a; font-size: 11.300px; }
.name { height: 28px; display: flex; align-items: center; justify-content: space-between; background: linear-gradient(#e8e8e8, #f8f8f8 60%, #f0f0f0); border-bottom: 1px solid #ccc; padding: 0 10px 0 4px; font-size: 14px; font-weight: 600; }
.name i { border: 6px solid transparent; border-bottom: 6px solid #222; border-top: 0; margin-top: -3px; }
.rows { height: 264px; }
.r { height: 24px; padding-left: 13px; font-size: 15.450px; line-height: 24px; display: flex; align-items: center; white-space: nowrap; }
.r svg { margin: 0 2px 0 -11px; }
.r.in { padding-left: 23px; }
.alt { background: #f6f6f6; }
.r.on { background: #3399ff; color: #fff; font-weight: 600; font-size: 15.900px; outline: 1px dotted #c8966a; outline-offset: -1px; }
.scroll { height: 13px; background: #d4d4d4; display: flex; border-top: 1px solid #aaa; }
.sb { width: 13px; background: #c8c8c8; border: 1px solid #999; display: flex; align-items: center; justify-content: center; }
.sb::after { content: ""; border: 3px solid transparent; }
.sb.l::after { border-right: 5px solid #999; border-left: 0; }
.sb.rr { margin-left: auto; }
.sb.rr::after { border-left: 5px solid #666; border-right: 0; }
.thumb { width: 189px; border: 1px solid #999; border-radius: 6px; background: linear-gradient(#ccc, #b8b8b8); }
.foot { height: 27px; flex: none; background: linear-gradient(#444, #3c3c3c); border-top: 1px solid #000; border-bottom: 1px solid #707070; }
.work2 { flex: 1; display: flex; flex-direction: column; min-width: 0; }
.panels { display: flex; height: 938px; }
.panel { display: flex; flex-direction: column; overflow: hidden; }
.a { width: 550px; border-right: 3px solid #a8a8a8; }
.b { width: 942px; }
.bar { height: 27px; flex: none; display: flex; align-items: center; background: linear-gradient(#858585, #747474 45%, #606060 46%, #484848); border-left: 1px solid #999; color: #f0f0f0; font-size: 11px; }
.b .bar { border-top: 2px solid #c4dc50; }
.a .bar { padding-top: 1px; }
.bar > svg { width: 16px; height: 16px; margin: 0 5px 1px; }
.cur { width: 141px; flex: none; align-self: stretch; margin: 1px 0; border-right: 2px solid #fff; display: flex; align-items: center; padding: 0 0 2px 9px; gap: 3px; }
.b .cur { margin: 0; }
.cur span { white-space: nowrap; font-weight: 600; letter-spacing: -.38px; }
.prev, .next { width: 5px; height: 10px; border: 5px solid transparent; border-left-width: 0; border-right: 5px solid #fff; flex: none; margin: 0 7px 2px 9px; }
.next { border-right: 0; border-left: 5px solid #fff; margin: 0 9px 2px 6px; }
.combo { flex: 1; min-width: 0; align-self: stretch; border-left: 1px solid #bbb; display: flex; align-items: center; justify-content: space-between; padding: 0 11px 2px 10px; font-size: 11.600px; white-space: nowrap; }
.b .combo { padding: 0 4px 2px 11px; }
.combo i { border: 4px solid transparent; border-top: 4px solid #fff; border-bottom: 0; flex: none; }
.bar > .lk { width: 17px; height: 14px; margin: 0 8px 5px; }
.end { align-self: stretch; border-left: 1px solid #bbb; display: flex; align-items: center; padding: 0 5px 1px 5px; gap: 6px; }
.ex { width: 16px; height: 16px; }
.cl { width: 11px; height: 11px; }
.view { position: relative; flex: 1; background: #fff; overflow: hidden; }
.graph { position: absolute; inset: 0; }
.lb { font-family: "DejaVu Sans", sans-serif; font-weight: 700; font-size: 11.500px; fill: #000; letter-spacing: -1px; }
.lb.blue { fill: #1850e6; }
.tab { position: absolute; right: 2px; width: 27px; height: 125px; border-radius: 4px 0 0 4px; display: flex; flex-direction: column; align-items: center; font-size: 16px; }
.tab svg { width: 12px; height: 12px; margin: 6px 2px 0 0; }
.tab span { writing-mode: vertical-rl; transform: rotate(180deg); line-height: 20px; }
.scene { top: 11px; background: linear-gradient(90deg, rgba(150,150,150,.75), rgba(110,110,110,.7)); color: #fff; font-weight: 600; }
.scene span { margin-top: 33px; }
.layers { top: 136px; background: linear-gradient(90deg, rgba(245,245,245,.6), rgba(220,220,220,.6)); border: 1px solid #ddd; border-right: 0; color: #5a5a5a; font-weight: 500; }
.layers span { margin-top: 32px; }
.mini { position: absolute; right: 0; bottom: 35px; }
.mx, .bx { position: absolute; width: 10px; height: 10px; background: #d8d8d8; font: 10px/10px "Noto Sans", sans-serif; text-align: center; color: #333; }
.mx { right: 118px; bottom: 153px; }
.bx { left: 0; bottom: 29px; }
.tools { position: absolute; left: 0; right: 0; bottom: 0; height: 35px; background: rgba(255,255,255,.42); display: flex; align-items: center; padding: 0 0 1px 2.500px; }
.tools svg { width: 20px; height: 20px; margin-right: 10px; }
.tools > i { width: 1px; height: 34px; background: #d4d4d4; margin: 0 10.500px 0 -5px; flex: none; }
.aa { width: 36px; height: 20px; margin-left: 0; border: 1px solid #888; border-radius: 3px; background: linear-gradient(#fff, #e4e4e4); text-align: center; font-size: 12px; line-height: 18px; color: #111; }
.ic { font: 700 7px "DejaVu Sans", sans-serif; fill: #111; }
.ic.red { fill: #d01820; font-weight: 400; font-size: 10px; }
.status { height: 27px; display: flex; align-items: center; background: linear-gradient(#484848, #3e3e3e); border-top: 1px solid #000; border-bottom: 1px solid #707070; color: #fff; font-size: 10.800px; font-weight: 600; padding: 0 7px 2px 10px; }
.s2 { margin-left: 10px; }
.s3 { margin-left: 17px; }
.add { margin: 0 16px 0 3px; width: 54px; white-space: nowrap; font-weight: 500; }
.key { display: flex; width: 80px; height: 15px; margin-right: 11px; line-height: 15px; text-align: center; }
.key b { width: 18px; background: #707070; border: 1px solid #aaa; line-height: 13px; font-weight: 600; }
.key em { flex: 1; background: linear-gradient(#e4e4e4, #ccc); color: #111; padding-left: 2px; border-radius: 0 2px 2px 0; white-space: nowrap; }
.key.w { width: 100px; margin: 0; }
.page { display: flex; align-items: center; gap: 13px; margin-left: 412px; }
.page i { border: 5px solid transparent; }
.page .pl { border-right: 6px solid #fff; border-left: 0; }
.page .pr { border-left: 6px solid #fff; border-right: 0; }
.lay { margin-left: auto; display: flex; gap: 18px; }
.lay svg { width: 12px; height: 14px; fill: none; stroke: #b0b0b0; stroke-width: 1.300; }
.bottom { height: 22px; background: linear-gradient(#545454, #464646); }
```
